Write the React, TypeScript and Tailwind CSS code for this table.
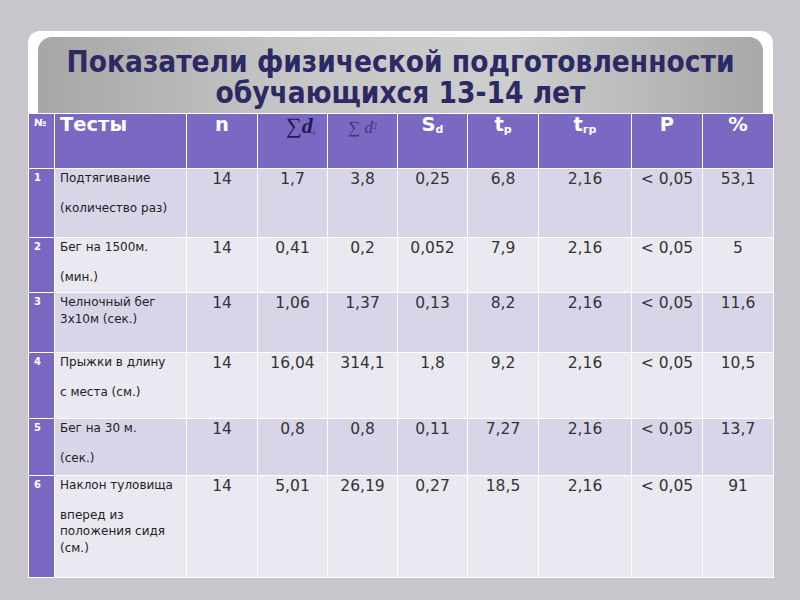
import React from "react";

type Row = {
  no: string;
  name: string[][];
  h: string;
  bg: string;
  v: string[];
};

const rows: Row[] = [
  { no: "1", name: [["Подтягивание"], ["(количество раз)"]], h: "h-[69px]", bg: "bg-[#d8d5e9]", v: ["14", "1,7", "3,8", "0,25", "6,8", "2,16", "< 0,05", "53,1"] },
  { no: "2", name: [["Бег на 1500м."], ["(мин.)"]], h: "h-[55px]", bg: "bg-[#eae9f1]", v: ["14", "0,41", "0,2", "0,052", "7,9", "2,16", "< 0,05", "5"] },
  { no: "3", name: [["Челночный бег", "3х10м (сек.)"]], h: "h-[60px]", bg: "bg-[#d8d5e9]", v: ["14", "1,06", "1,37", "0,13", "8,2", "2,16", "< 0,05", "11,6"] },
  { no: "4", name: [["Прыжки в длину"], ["с места (см.)"]], h: "h-[66px]", bg: "bg-[#eae9f1]", v: ["14", "16,04", "314,1", "1,8", "9,2", "2,16", "< 0,05", "10,5"] },
  { no: "5", name: [["Бег на 30 м."], ["(сек.)"]], h: "h-[57px]", bg: "bg-[#d8d5e9]", v: ["14", "0,8", "0,8", "0,11", "7,27", "2,16", "< 0,05", "13,7"] },
  { no: "6", name: [["Наклон туловища"], ["вперед из", "положения сидя", "(см.)"]], h: "h-[102px]", bg: "bg-[#eae9f1]", v: ["14", "5,01", "26,19", "0,27", "18,5", "2,16", "< 0,05", "91"] },
];

const cell = "border border-white align-top p-0";

export default function App() {
  return (
    <div className="w-[800px] h-[600px] bg-[#c9c5cd] pt-[31px] pl-[28px] font-['DejaVu_Sans',sans-serif] overflow-hidden">
      <div className="w-[745px] bg-white rounded-t-[12px]">
        <div className="mx-[10px] pt-[6px]">
          <div className="h-[76px] rounded-t-[14px] bg-[linear-gradient(90deg,#a6a6a6_0%,#c6c6c6_35%,#cdcdcd_65%,#a8a8a8_100%)] flex flex-col items-center pt-[10px]">
            <div className="font-['DejaVu_Sans_Condensed','DejaVu_Sans',sans-serif] font-stretch-condensed font-bold text-[29.5px] leading-[31px] text-[#2d2965] text-center">
              <div>Показатели физической подготовленности</div>
              <div>обучающихся 13-14 лет</div>
            </div>
          </div>
        </div>
      </div>
      <table className="table-fixed border-collapse w-[745px] border border-white">
        <colgroup>
          <col className="w-[26px]" />
          <col className="w-[132px]" />
          <col className="w-[71px]" />
          <col className="w-[70px]" />
          <col className="w-[70px]" />
          <col className="w-[70px]" />
          <col className="w-[71px]" />
          <col className="w-[93px]" />
          <col className="w-[71px]" />
          <col className="w-[71px]" />
        </colgroup>
        <thead>
          <tr className="h-[55px] bg-[#7b68c2] text-white">
            <th className={`${cell} text-[10px] font-bold text-left pl-[5px] pt-[3px] leading-[12px]`}>№</th>
            <th className={`${cell} text-[19.5px] font-bold text-left pl-[5px] leading-[22px] pt-[0px]`}>Тесты</th>
            <th className={`${cell} text-[19.5px] font-bold leading-[22px] pt-[0px]`}>n</th>
            <th className={`${cell} font-normal pt-[1px]`}>
              <span className="font-['Liberation_Serif',serif] text-[22px] leading-[22px] text-[#1e1a52] pl-[16px]">
                ∑<i className="font-bold">d</i>
                <sub className="text-[8px] italic">i</sub>
              </span>
            </th>
            <th className={`${cell} font-normal pt-[2px]`}>
              <span className="font-['Liberation_Serif',serif] text-[17px] leading-[20px] text-[#3c3875]">
                ∑ <i>d</i>
                <sup className="text-[8px]">2</sup>
              </span>
            </th>
            <th className={`${cell} font-bold leading-[22px] pt-[0px]`}>
              <span className="text-[19.5px]">S</span>
              <span className="text-[11px] relative top-[2px]">d</span>
            </th>
            <th className={`${cell} font-bold leading-[22px] pt-[0px]`}>
              <span className="text-[19.5px]">t</span>
              <span className="text-[11px] relative top-[2px]">р</span>
            </th>
            <th className={`${cell} font-bold leading-[22px] pt-[0px]`}>
              <span className="text-[19.5px]">t</span>
              <span className="text-[11px] relative top-[2px]">гр</span>
            </th>
            <th className={`${cell} text-[19.5px] font-bold leading-[22px] pt-[0px]`}>P</th>
            <th className={`${cell} text-[19.5px] font-bold leading-[22px] pt-[0px]`}>%</th>
          </tr>
        </thead>
        <tbody>
          {rows.map((r) => (
            <tr key={r.no} className={`${r.h} ${r.bg}`}>
              <td className={`${cell} bg-[#7a67c1] text-white font-bold text-[10px] leading-[12px] pl-[5px] pt-[3px]`}>{r.no}</td>
              <td className={`${cell} text-[12px] leading-[16.5px] text-[#222] pl-[5px] pt-[1px]`}>
                {r.name.map((p, i) => (
                  <div key={i} className={i > 0 ? "mt-[13px]" : ""}>
                    {p.map((l, j) => (
                      <div key={j}>{l}</div>
                    ))}
                  </div>
                ))}
              </td>
              {r.v.map((v, i) => (
                <td key={i} className={`${cell} text-center text-[15.5px] leading-[18px] text-[#333] pt-[1px]`}>
                  {v}
                </td>
              ))}
            </tr>
          ))}
        </tbody>
      </table>
    </div>
  );
}
